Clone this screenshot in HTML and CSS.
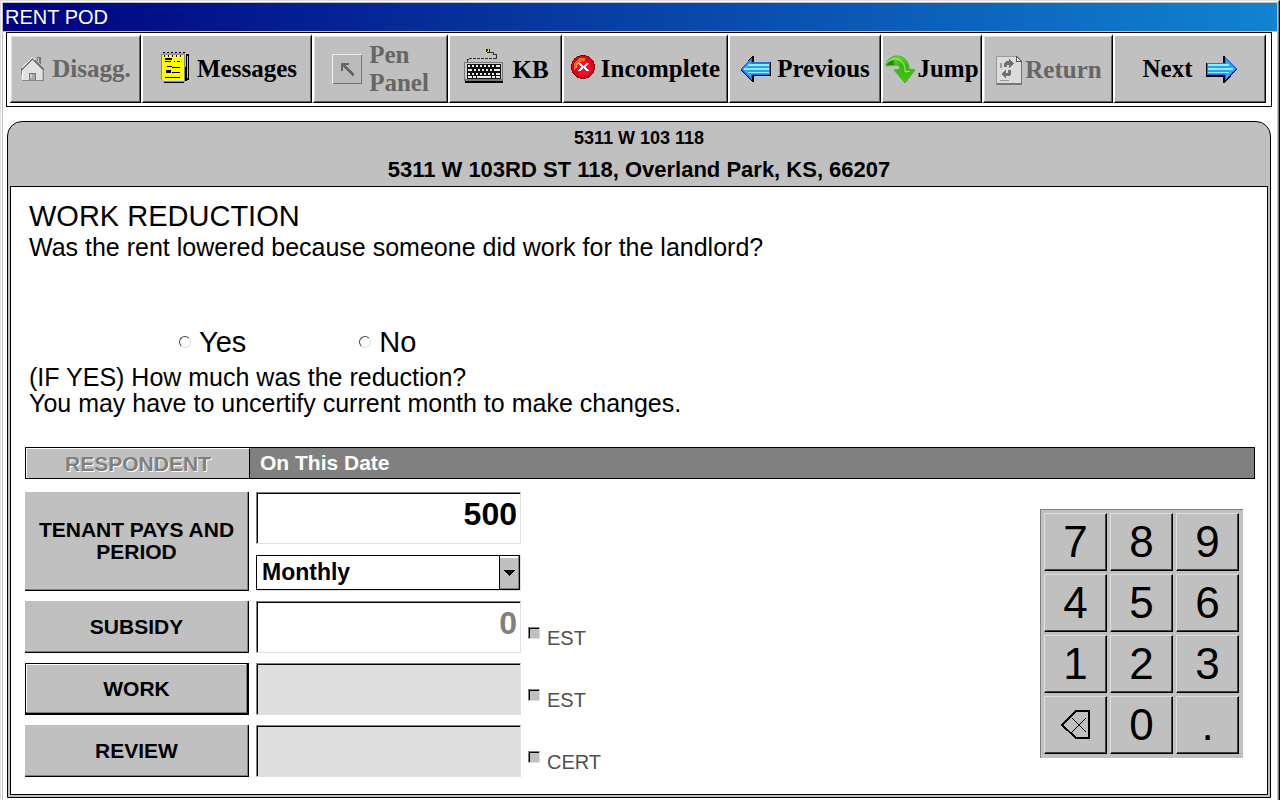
FILE: index.html
```html
<!DOCTYPE html>
<html lang="en">
<head>
<meta charset="utf-8">
<title>Rent Pod</title>
<link rel="stylesheet" href="styles.css">
</head>
<body>
<div class="window">
  <header class="titlebar">RENT POD</header>
  <nav class="toolbar">
    <button class="tool off" type="button" disabled>
      <svg width="25" height="26" viewBox="0 0 25 26" shape-rendering="crispEdges">
        <path d="M17 1h4v8l-4-4z" fill="#777"/><path d="M18 2h1v5h-1z" fill="#ccc"/>
        <path d="M3 12 12 3l10 9v13H3z" fill="#e2e2e2"/>
        <path d="M0 13 12 1l12 12v3L12 4 2 14z" fill="#777"/>
        <path d="M1 12 12 1l3 3v1l-3-3L2 13z" fill="#f2f2f2"/>
        <path d="M9 17h7v8H9z" fill="#777"/><path d="M10 18h5v7h-5z" fill="#a8a8a8"/><path d="M10 18h2v4h-2z" fill="#ccc"/>
        <path d="M1 14h1v11h22V14h-1v10H2z" fill="#888"/><path d="M2 15h1v9H2z" fill="#fff"/>
      </svg>
      <span>Disagg.</span>
    </button>
    <button class="tool messages" type="button">
      <svg width="28" height="31" viewBox="0 0 28 31" shape-rendering="crispEdges">
        <path d="M3 29h20v2H3z" fill="#000"/><path d="M25 2h3v26h-2v1h-2z" fill="#000"/>
        <path d="M26 4h1v22h-1z" fill="#bbb"/>
        <path d="M0 2h24v28H2v-2H0z" fill="#888"/><path d="M2 28h21v1H2z" fill="#ddd"/>
        <path d="M1 3h22v25H1z" fill="#ff0"/>
        <path d="M1 1h23v2H1z" fill="#999"/>
        <path d="M2 0h2v1H2zm4 0h2v1H6zm4 0h2v1h-2zm4 0h2v1h-2zm4 0h2v1h-2zm4 0h2v1h-2zM3 3h1v2H3zm4 0h1v2H7zm4 0h1v2h-1zm4 0h1v2h-1zm4 0h1v2h-1zM4 6h7v2H4zm0 3h6v1H4zm9 0h1v1h-1zm3 0h3v1h-3zM6 14h5v1H6zm5 1h8v1h-8zM5 18h5v3H5zm6 2h8v1h-8zM4 25h15v1H4z" fill="#000"/>
      </svg>
      <span>Messages</span>
    </button>
    <button class="tool off" type="button" disabled>
      <svg width="30" height="30" viewBox="0 0 30 30" shape-rendering="crispEdges">
        <path d="M1 1h27v27H1z" fill="#bababa"/>
        <path d="M0 0h30v1H1v29H0z" fill="#eee"/><path d="M29 1h1v29H1v-1h28z" fill="#707070"/>
        <path d="M9 9h8v2h-4l9 9v2h-2l-9-9v4H9z" fill="#666"/>
      </svg>
      <span>Pen<br>Panel</span>
    </button>
    <button class="tool kb" type="button">
      <svg width="40" height="35" viewBox="0 0 40 35" shape-rendering="crispEdges">
        <path d="M3 14V11h2M30 10h2V6h-3V4h-4" fill="none" stroke="#333"/>
        <path d="M5 10h26" fill="none" stroke="#333" stroke-dasharray="3 1"/>
        <path d="M22 1h4v4h-3V4h-1z" fill="#222"/><path d="M24 1h1v3h-2V3h1z" fill="#d8e020"/>
        <path d="M1 32h38v3H1z" fill="#000"/><path d="M0 14h39v19H0z" fill="#777"/>
        <path d="M1 15h37v16H1z" fill="#ccc"/><path d="M3 16h34v15H3z" fill="#111"/>
        <path d="M4 17h2v2H4zm4 0h2v2H8zm4 0h2v2h-2zm4 0h2v2h-2zm4 0h2v2h-2zm4 0h2v2h-2zm4 0h2v2h-2zm4 0h4v2h-4zM4 21h4v2H4zm6 0h2v2h-2zm4 0h2v2h-2zm4 0h2v2h-2zm4 0h2v2h-2zm4 0h2v2h-2zm4 0h6v2h-6zM4 25h2v2H4zm4 0h2v2H8zm4 0h2v2h-2zm4 0h2v2h-2zm4 0h2v2h-2zm4 0h2v2h-2zm4 0h2v2h-2zm4 0h4v2h-4zM4 28h4v2H4zm5 0h3v2H9zm4 0h14v2H13zm15 0h3v2h-3zm4 0h4v2h-4z" fill="#eee"/>
      </svg>
      <span>KB</span>
    </button>
    <button class="tool" type="button">
      <svg class="raise" width="24" height="24" viewBox="0 0 24 24" shape-rendering="crispEdges">
        <circle cx="12" cy="12" r="12" fill="#800"/><circle cx="12" cy="12" r="11" fill="#e2001c"/>
        <path d="M3 15V8l5-5h6v3l-6 2-2 4z" fill="#ff6a1a"/><path d="M5 14V9l4-3h4l-6 4z" fill="#ff9440"/>
        <circle cx="13" cy="13" r="7" fill="#ff0a32"/>
        <path d="M7 8h3l2 3 3-3h3v1l-4 3 4 3v1h-3l-3-3-2 3H7v-1l3-3-3-3z" fill="#fff"/>
      </svg>
      <span>Incomplete</span>
    </button>
    <button class="tool" type="button">
      <svg width="31" height="26" viewBox="0 0 31 26" shape-rendering="crispEdges">
        <path d="M12 0h2v6h17v14H14v6h-2L1 14z" fill="#000"/>
        <path d="M0 13 12 1v5h18v13H12v5z" fill="#2f6cf0"/>
        <path d="M2 13 11 4v18z" fill="#38a4f8"/><path d="M8 8h21v10H8z" fill="#2d9df6"/>
        <path d="M8 8h21v2H8zm0 4h21v2H8zm0 4h21v1H8zM4 12h6v2H4z" fill="#8aefff"/>
      </svg>
      <span>Previous</span>
    </button>
    <button class="tool jump" type="button">
      <svg width="31" height="29" viewBox="0 0 31 29">
        <defs><linearGradient id="leaf" x1="0" y1="0" x2="0" y2="1"><stop offset="0" stop-color="#68dc38"/><stop offset=".35" stop-color="#35b510"/><stop offset="1" stop-color="#41c916"/></linearGradient></defs>
        <path d="M1 11C1 5 6 1 12 1c8 0 12 6 12 13l6 1-10 13L9 15l6-1c0-3-2-4-4-4z" fill="url(#leaf)" stroke="#55ad38"/>
        <path d="M2 8c3-5 12-6 16 0 2 3 2 5 2 9l5-1" fill="none" stroke="#a2ee80"/>
        <path d="M2 10c1-4 6-5 8-4-2 1-2 2-1 4z" fill="#228508"/>
      </svg>
      <span>Jump</span>
    </button>
    <button class="tool off ret" type="button" disabled>
      <svg width="26" height="29" viewBox="0 0 26 29" shape-rendering="crispEdges">
        <path d="M0 0h21l5 5v24H0z" fill="#999"/><path d="M1 1h19v5h5v21H1z" fill="#dcdcdc"/>
        <path d="M25 5h1v24H1v-2h24z" fill="#757575"/><path d="M20 0v6h6z" fill="#555"/><path d="M21 2v3h3z" fill="#eee"/>
        <path d="M8 11V7l2-2h3V3l5 4-5 5V9h-2v2zM15 14v4l-2 2h-3v3l-5-5 5-4v3h2v-3z" fill="#707070"/>
        <path d="M4 7h2v5H4zM4 24h9v1H4z" fill="#999"/>
      </svg>
      <span>Return</span>
    </button>
    <button class="tool next" type="button">
      <span>Next</span>
      <svg width="31" height="27" viewBox="0 0 31 27" shape-rendering="crispEdges">
        <path d="M17 0h2l12 13-12 14h-2v-6H0V7h17z" fill="#000"/>
        <path d="M31 13 19 1v6H1v12h18v5z" fill="#2f6cf0"/>
        <path d="M29 13 20 4v18z" fill="#38a4f8"/><path d="M2 8h21v10H2z" fill="#2d9df6"/>
        <path d="M2 8h21v2H2zm0 4h21v2H2zm0 4h21v1H2zM21 12h6v2h-6z" fill="#8aefff"/>
      </svg>
    </button>
  </nav>

  <main class="frame">
    <div class="address">
      <p class="unit">5311 W 103 118</p>
      <p class="street">5311 W 103RD ST 118, Overland Park, KS, 66207</p>
    </div>
    <form class="sheet">
      <h1 class="heading">WORK REDUCTION</h1>
      <p class="ask" id="question">Was the rent lowered because someone did work for the landlord?</p>
      <div class="answers" role="radiogroup" aria-labelledby="question">
        <label class="answer"><input class="radio" type="radio" name="lowered"> Yes</label>
        <label class="answer"><input class="radio" type="radio" name="lowered"> No</label>
      </div>
      <p class="note">(IF YES) How much was the reduction?<br>You may have to uncertify current month to make changes.</p>

      <div class="bar">
        <button class="respondent" type="button" disabled>RESPONDENT</button>
        <h2 class="date">On This Date</h2>
      </div>

      <div class="entry">
        <div class="rows">
          <button class="label" type="button">TENANT PAYS AND PERIOD</button>
          <div class="pays">
            <input class="amount" type="text" value="500" aria-label="Tenant pays">
            <div class="combo">
              <select class="period" aria-label="Period"><option>Monthly</option><option>Weekly</option></select>
              <span class="drop"><svg width="11" height="6" viewBox="0 0 11 6" shape-rendering="crispEdges"><path d="M0 0h11L6 6H5z"/></svg></span>
            </div>
          </div>
          <span></span>

          <button class="label" type="button">SUBSIDY</button>
          <input class="amount" type="text" value="0" aria-label="Subsidy" disabled>
          <label class="flag"><input class="check" type="checkbox" disabled><span>EST</span></label>

          <button class="label current" type="button">WORK</button>
          <input class="amount blank" type="text" aria-label="Work" disabled>
          <label class="flag"><input class="check" type="checkbox" disabled><span>EST</span></label>

          <button class="label" type="button">REVIEW</button>
          <input class="amount blank" type="text" aria-label="Review" disabled>
          <label class="flag"><input class="check" type="checkbox" disabled><span>CERT</span></label>
        </div>

        <div class="keypad">
          <button class="key" type="button">7</button>
          <button class="key" type="button">8</button>
          <button class="key" type="button">9</button>
          <button class="key" type="button">4</button>
          <button class="key" type="button">5</button>
          <button class="key" type="button">6</button>
          <button class="key" type="button">1</button>
          <button class="key" type="button">2</button>
          <button class="key" type="button">3</button>
          <button class="key" type="button" aria-label="Backspace">
            <svg width="32" height="32" viewBox="0 0 32 32" fill="none" stroke="#000" shape-rendering="crispEdges"><path d="M2 16 16 2h13v27H16z" stroke-width="2"/><path d="M12 9l14 14M26 9L12 23"/></svg>
          </button>
          <button class="key" type="button">0</button>
          <button class="key" type="button">.</button>
        </div>
      </div>
    </form>
  </main>
</div>
</body>
</html>
```
FILE: styles.css
```css
* { box-sizing: border-box; }

body {
  margin: 0;
  background: #fff;
  color: #000;
  font-family: "Liberation Sans", Arial, sans-serif;
}

p, h1, h2 { margin: 0; font-weight: normal; }

button, input, select { margin: 0; color: inherit; font: inherit; border-radius: 0; }

.window {
  min-height: 100vh;
  padding: 1px 1px 0;
  border: solid;
  border-width: 1px 1px 0 1px;
  border-color: #dfdfdf #000 #dfdfdf #dfdfdf;
  box-shadow: inset -1px 0 #808080, inset 1px 1px #fff, inset -2px 0 #c0c0c0, inset 2px 2px #c0c0c0;
}

.titlebar {
  margin: 1px 1px 0;
  padding-left: 2px;
  height: 29px;
  border-bottom: 1px solid #c0c0c0;
  background: linear-gradient(90deg, #000080, #1084d0);
  color: #fff;
  font-size: 20px;
  line-height: 28px;
}

.toolbar {
  display: grid;
  grid-template-columns: 132fr 171fr 136fr 114fr 166fr 153fr 101fr 131fr 153fr;
  margin: 0 6px 0 4px;
  padding: 1px 5px 3px 2px;
  border: 1px solid #000;
}

.tool {
  display: flex;
  align-items: center;
  justify-content: center;
  gap: 6px;
  min-height: 69px;
  padding: 0;
  border: solid;
  border-width: 2px 1px 1px 2px;
  border-color: #fff #000 #000 #fff;
  background: #c0c0c0;
  box-shadow: inset -1px -1px #606060;
  font-family: "Liberation Serif", "Times New Roman", serif;
  font-size: 25px;
  font-weight: bold;
  line-height: 28px;
  text-align: left;
}

.tool svg { flex: none; }
.off { color: #666; gap: 7px; box-shadow: inset -1px -1px #606060, inset 1px 1px #dfdfdf; }
.messages { gap: 8px; padding-left: 4px; }
.messages svg { margin-bottom: 4px; }
.kb { gap: 8px; padding: 2px 0 0 2px; }
.kb svg { margin-bottom: 10px; }
.raise { margin-bottom: 4px; }
.jump { gap: 1px; }
.ret { gap: 3px; padding: 2px 0 0 2px; }
.next { gap: 14px; }

.frame {
  margin: 14px 7px 0 5px;
  padding: 0 2px 2px;
  border: 1px solid #000;
  border-radius: 15px 15px 0 0;
  background: #c0c0c0;
}

.address {
  padding: 5px 0 2px;
  text-align: center;
}

.unit { font-size: 18px; font-weight: bold; line-height: 22px; }
.street { margin-top: 7px; font-size: 22px; font-weight: bold; line-height: 28px; }

.sheet {
  display: block;
  padding: 12px 12px 17px 14px;
  border: 1px solid #000;
  background: #fff;
}

.heading { padding-left: 4px; font-size: 29px; line-height: 34px; }
.ask { padding-left: 4px; font-size: 25px; line-height: 28px; }

.answers {
  display: flex;
  gap: 113px;
  margin-top: 64px;
  padding-left: 154px;
}

.answer { display: flex; align-items: center; gap: 8px; font-size: 29px; line-height: 34px; }

.radio {
  appearance: none;
  width: 12px;
  height: 12px;
  border: 1px solid;
  border-color: #444 #ddd #ddd #444;
  border-radius: 50%;
}

.note { margin-top: 5px; padding-left: 4px; font-size: 25px; line-height: 26px; }

.bar {
  display: flex;
  margin-top: 31px;
  border: 1px solid #000;
  background: #808080;
  font-size: 21px;
  line-height: 28px;
}

.respondent {
  width: 224px;
  padding: 0;
  border: solid;
  border-width: 1px 1px 0 1px;
  border-color: #fff #000 #fff #fff;
  background: #c0c0c0;
  color: #808080;
  font-weight: bold;
  text-shadow: 1px 1px #fff;
}

.date { padding-left: 10px; color: #fff; font-size: 21px; font-weight: bold; line-height: 30px; }

.entry {
  display: flex;
  align-items: flex-start;
  justify-content: space-between;
  margin-top: 13px;
}

.rows {
  display: grid;
  grid-template-columns: 224px 265px auto;
  gap: 10px 7px;
}

.label {
  padding: 0 8px;
  border: solid;
  border-width: 0 1px 1px 0;
  border-color: #000;
  background: #c0c0c0;
  box-shadow: inset -1px -1px #808080;
  font-size: 21px;
  font-weight: bold;
  line-height: 22px;
}

.current {
  border-width: 1px 2px 2px 1px;
  box-shadow: inset -1px -1px #808080, inset 1px 1px #fff;
}

.pays { display: grid; gap: 11px; }

.amount {
  width: 100%;
  height: 52px;
  padding: 0 3px 8px 4px;
  border: solid;
  border-width: 1px;
  border-color: #808080 #dfdfdf #dfdfdf #808080;
  background: #fff;
  box-shadow: inset 1px 1px #000;
  font-size: 32px;
  font-weight: bold;
  text-align: right;
}

.amount:disabled { color: #808080; }
.blank, .blank:disabled { background: #dfdfdf; }

.combo { display: grid; height: 36px; border: solid #dfdfdf; border-width: 0 1px 1px 0; }

.period {
  grid-area: 1 / 1;
  appearance: none;
  padding: 0 24px 2px 5px;
  border: 1px solid #000;
  background: #fff;
  font-size: 23px;
  font-weight: bold;
}

.drop {
  grid-area: 1 / 1;
  justify-self: end;
  display: flex;
  align-items: center;
  justify-content: center;
  width: 21px;
  border: 1px solid #000;
  background: #c0c0c0;
  box-shadow: inset -1px -1px #808080, inset 0 2px #fff;
  pointer-events: none;
}

.flag {
  display: flex;
  align-items: center;
  gap: 7px;
  color: #505050;
  font-size: 20px;
  line-height: 24px;
}

.flag span { margin-top: 22px; }

.check {
  appearance: none;
  width: 12px;
  height: 12px;
  margin-top: 12px;
  border: 1px solid;
  border-color: #808080 #dfdfdf #dfdfdf #808080;
  background: #c0c0c0;
  box-shadow: inset 1px 1px #000;
}

.keypad {
  display: grid;
  grid-template-columns: repeat(3, 63px);
  gap: 3px;
  margin: 17px 12px 0 0;
  padding: 3px 4px 4px 3px;
  border: solid #808080;
  border-width: 1px 0 0 1px;
  background: #c0c0c0;
}

.key {
  display: flex;
  align-items: center;
  justify-content: center;
  height: 58px;
  padding: 0;
  border: 1px solid;
  border-color: #dfdfdf #000 #000 #dfdfdf;
  background: #c0c0c0;
  box-shadow: inset -1px -1px #404040;
  font-size: 44px;
}
```
